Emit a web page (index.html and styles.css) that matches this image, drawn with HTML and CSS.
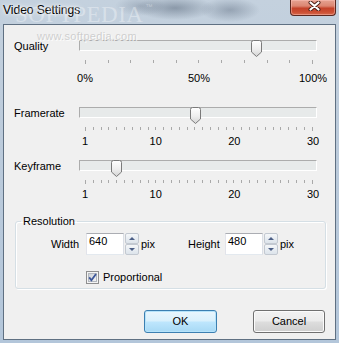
FILE: index.html
```html
<!DOCTYPE html>
<html>
<head>
<meta charset="utf-8">
<link rel="stylesheet" href="styles.css">
</head>
<body>
<div class="window">
  <div class="titlebar">
    <span class="title">Video Settings</span>
    <div class="close">
      <svg width="13" height="10" viewBox="0 0 13 10"><path d="M2.5 1.5 L10.5 8.5 M10.5 1.5 L2.5 8.5" stroke="#4a1c14" stroke-width="4" stroke-linecap="round"/><path d="M2.5 1.5 L10.5 8.5 M10.5 1.5 L2.5 8.5" stroke="#fff" stroke-width="2.2" stroke-linecap="round"/></svg>
    </div>
  </div>
  <div class="client">
    <div class="sliders">
      <div class="slider-row quality">
        <div class="label">Quality</div>
        <div class="slider">
          <div class="track-area">
            <div class="track"></div>
            <div class="rail">
              <svg class="thumb" style="left:75%" width="11" height="17" viewBox="0 0 11 17"><defs><linearGradient id="t1" x1="0" y1="0" x2="0" y2="1"><stop offset="0" stop-color="#ffffff"/><stop offset="0.55" stop-color="#eeeeee"/><stop offset="1" stop-color="#d2d2d2"/></linearGradient></defs><path d="M2.5 .5 H8.5 Q10.5 .5 10.5 2.5 V12 L5.5 16.5 L.5 12 V2.5 Q.5 .5 2.5 .5 Z" fill="url(#t1)" stroke="#7a7a7a"/></svg>
            </div>
          </div>
          <div class="ticks"><i></i><i></i><i></i><i></i><i></i><i></i><i></i><i></i><i></i><i></i><i></i></div>
          <div class="scale"><span style="left:0%">0%</span><span style="left:50%">50%</span><span style="left:100%">100%</span></div>
        </div>
      </div>
      <div class="slider-row framerate">
        <div class="label">Framerate</div>
        <div class="slider">
          <div class="track-area">
            <div class="track"></div>
            <div class="rail">
              <svg class="thumb" style="left:48.28%" width="11" height="17" viewBox="0 0 11 17"><defs><linearGradient id="t2" x1="0" y1="0" x2="0" y2="1"><stop offset="0" stop-color="#ffffff"/><stop offset="0.55" stop-color="#eeeeee"/><stop offset="1" stop-color="#d2d2d2"/></linearGradient></defs><path d="M2.5 .5 H8.5 Q10.5 .5 10.5 2.5 V12 L5.5 16.5 L.5 12 V2.5 Q.5 .5 2.5 .5 Z" fill="url(#t2)" stroke="#7a7a7a"/></svg>
            </div>
          </div>
          <div class="ticks"><i></i><i></i><i></i><i></i><i></i><i></i><i></i><i></i><i></i><i></i><i></i><i></i><i></i><i></i><i></i><i></i><i></i><i></i><i></i><i></i><i></i><i></i><i></i><i></i><i></i><i></i><i></i><i></i><i></i><i></i></div>
          <div class="scale"><span style="left:0%">1</span><span style="left:31.03%">10</span><span style="left:65.52%">20</span><span style="left:100%">30</span></div>
        </div>
      </div>
      <div class="slider-row keyframe">
        <div class="label">Keyframe</div>
        <div class="slider">
          <div class="track-area">
            <div class="track"></div>
            <div class="rail">
              <svg class="thumb" style="left:13.79%" width="11" height="17" viewBox="0 0 11 17"><defs><linearGradient id="t3" x1="0" y1="0" x2="0" y2="1"><stop offset="0" stop-color="#ffffff"/><stop offset="0.55" stop-color="#eeeeee"/><stop offset="1" stop-color="#d2d2d2"/></linearGradient></defs><path d="M2.5 .5 H8.5 Q10.5 .5 10.5 2.5 V12 L5.5 16.5 L.5 12 V2.5 Q.5 .5 2.5 .5 Z" fill="url(#t3)" stroke="#7a7a7a"/></svg>
            </div>
          </div>
          <div class="ticks"><i></i><i></i><i></i><i></i><i></i><i></i><i></i><i></i><i></i><i></i><i></i><i></i><i></i><i></i><i></i><i></i><i></i><i></i><i></i><i></i><i></i><i></i><i></i><i></i><i></i><i></i><i></i><i></i><i></i><i></i></div>
          <div class="scale"><span style="left:0%">1</span><span style="left:31.03%">10</span><span style="left:65.52%">20</span><span style="left:100%">30</span></div>
        </div>
      </div>
    </div>

    <fieldset class="group">
      <legend>Resolution</legend>
      <div class="fields">
        <div class="field">
          <span class="flabel w-label">Width</span>
          <div class="input">640</div>
          <div class="spin"><span class="up"><b></b></span><span class="down"><b></b></span></div>
          <span class="unit">pix</span>
        </div>
        <div class="field">
          <span class="flabel h-label">Height</span>
          <div class="input">480</div>
          <div class="spin"><span class="up"><b></b></span><span class="down"><b></b></span></div>
          <span class="unit">pix</span>
        </div>
      </div>
      <div class="check-row">
        <svg class="checkbox" width="13" height="13" viewBox="0 0 13 13"><defs><linearGradient id="cb" x1="0" y1="0" x2="1" y2="1"><stop offset="0" stop-color="#cbcfd5"/><stop offset="1" stop-color="#f6f6f6"/></linearGradient></defs><rect x=".5" y=".5" width="12" height="12" fill="#f4f4f4" stroke="#8f8f8f"/><rect x="2.5" y="2.5" width="8" height="8" fill="url(#cb)" stroke="#b3b8bf"/><path d="M3.2 6.4 L5.4 9.2 L10 3" fill="none" stroke="#3c5699" stroke-width="1.8"/></svg>
        <span class="check-label">Proportional</span>
      </div>
    </fieldset>

    <div class="buttons">
      <div class="btn ok">OK</div>
      <div class="btn cancel">Cancel</div>
    </div>

    <span class="wm-url">www.softpedia.com</span>
  </div>
  <span class="wm-title">SOFTPEDIA<sup>™</sup></span>
</div>
</body>
</html>
```

FILE: styles.css
```css
* { box-sizing: border-box; }
html, body { margin: 0; padding: 0; }
body {
  width: 339px;
  height: 343px;
  overflow: hidden;
  font-family: "Liberation Sans", Arial, sans-serif;
  font-size: 11px;
  color: #000;
}
.window {
  position: relative;
  width: 339px;
  height: 343px;
  display: flex;
  flex-direction: column;
  overflow: hidden;
  background:
    radial-gradient(ellipse 40px 12px at 175px 8px, rgba(70, 85, 105, 0.45), rgba(70, 85, 105, 0)),
    radial-gradient(ellipse 30px 12px at 230px 10px, rgba(80, 95, 115, 0.4), rgba(80, 95, 115, 0)),
    radial-gradient(ellipse 25px 10px at 140px 6px, rgba(90, 105, 125, 0.3), rgba(90, 105, 125, 0)),
    linear-gradient(180deg, #c4d1de 0%, #bccbdb 40%, #b3c6da 100%);
}
.titlebar {
  height: 24px;
  flex: none;
  display: flex;
  align-items: flex-start;
}
.title {
  padding: 2px 0 0 3px;
  font-size: 12px;
  line-height: 16px;
  color: #000;
  text-shadow: 0 0 6px #fff, 0 0 3px #fff;
}
.close {
  margin-left: auto;
  margin-right: 3px;
  width: 46px;
  height: 16px;
  border: 1px solid #5b2820;
  border-top: none;
  border-radius: 0 0 4px 4px;
  background: linear-gradient(180deg, #e6a292 0%, #dc8672 40%, #c4422a 55%, #cc4f33 80%, #d56a4e 100%);
  box-shadow: inset 0 0 0 1px rgba(255, 200, 190, 0.45);
  display: flex;
  justify-content: center;
  align-items: flex-start;
  padding-top: 1px;
  padding-left: 3px;
}
.close svg { display: block; }

.client {
  position: relative;
  flex: 1;
  margin: 0 3px 3px 3px;
  border: 1px solid #5f7082;
  background: #f0f0f0;
  display: flex;
  flex-direction: column;
}
.sliders {
  padding-top: 13px;
}
.slider-row {
  display: grid;
  grid-template-columns: 65px 238px;
  padding-left: 10px;
}
.framerate { margin-top: 20px; }
.keyframe { margin-top: 10px; }
.label {
  padding-top: 2px;
  line-height: 13px;
}
.track-area {
  position: relative;
  height: 17px;
}
.track {
  margin-top: 2px;
  height: 11px;
  border: 1px solid;
  border-color: #acacac #ffffff #ffffff #acacac;
  background: #e7eaea;
}
.rail {
  position: absolute;
  top: 0;
  left: 6px;
  right: 4px;
  height: 17px;
}
.thumb {
  position: absolute;
  top: 0;
  margin-left: -5px;
  display: block;
}
.ticks {
  display: flex;
  justify-content: space-between;
  align-items: flex-start;
  margin: 3px 4px 0 6px;
  height: 4px;
}
.ticks i {
  display: block;
  width: 1px;
  height: 3px;
  background: #a9a9a9;
}
.ticks i:first-child, .ticks i:last-child { height: 4px; }
.scale {
  position: relative;
  height: 13px;
  line-height: 13px;
  margin: 4px 4px 0 6px;
}
.quality .scale { margin-top: 8px; }
.scale span {
  position: absolute;
  top: 0;
  transform: translateX(-50%);
  white-space: nowrap;
}

.group {
  margin: 14px 9px 0 11px;
  padding: 5px 0 4px 5px;
  border: 1px solid #d5dfe5;
  border-radius: 3px;
  box-shadow: inset 1px 1px 0 #fff, 1px 1px 0 #fff;
  min-width: 0;
}
.group legend {
  padding: 0 2px;
  line-height: 13px;
}
.fields {
  display: flex;
  padding-left: 30px;
  height: 22px;
}
.field {
  display: flex;
  align-items: center;
  width: 151px;
}
.flabel { line-height: 13px; }
.w-label { width: 35px; }
.h-label { width: 37px; }
.input {
  width: 38px;
  height: 22px;
  background: #fff;
  border: 1px solid;
  border-color: #abadb3 #dbdfe6 #e3e9ef #e2e3ea;
  padding: 1px 0 0 2px;
  font-size: 11px;
  line-height: 13px;
}
.spin {
  margin-left: 1px;
  width: 14px;
  height: 22px;
  display: flex;
  flex-direction: column;
}
.spin span {
  height: 11px;
  border: 1px solid #c3c9d1;
  border-radius: 2px;
  background: linear-gradient(180deg, #f5f7f9 0%, #e8edf2 50%, #dde4eb 100%);
  display: flex;
  justify-content: center;
  align-items: center;
}
.spin b {
  display: block;
  width: 0;
  height: 0;
  border-left: 3px solid transparent;
  border-right: 3px solid transparent;
}
.spin .up b { border-bottom: 3px solid #4c5f86; }
.spin .down b { border-top: 3px solid #4c5f86; }
.unit { margin-left: 2px; line-height: 13px; }

.check-row {
  display: flex;
  align-items: center;
  margin-top: 15px;
  padding-left: 65px;
  height: 14px;
}
.checkbox { display: block; flex: none; }
.check-label { margin-left: 4px; line-height: 13px; }

.buttons {
  display: flex;
  justify-content: flex-end;
  gap: 36px;
  margin-top: 21px;
  padding-right: 10px;
}
.btn {
  height: 23px;
  border-radius: 3px;
  display: flex;
  justify-content: center;
  align-items: center;
  line-height: 13px;
}
.ok {
  width: 73px;
  border: 1px solid #3c7fb1;
  background: linear-gradient(180deg, #eaf6fd 0%, #d9f0fc 48%, #bee6fd 52%, #a7d9f5 100%);
  box-shadow: inset 0 0 0 1px #b6e3fa;
}
.cancel {
  width: 72px;
  border: 1px solid #707070;
  background: linear-gradient(180deg, #f2f2f2 0%, #ebebeb 48%, #dddddd 52%, #cfcfcf 100%);
  box-shadow: inset 0 0 0 1px #fbfbfb;
}

.wm-url {
  position: absolute;
  left: 33px;
  top: 5px;
  font-size: 11px;
  color: rgba(190, 190, 190, 0.7);
  text-shadow: 1px 1px 0 rgba(255, 255, 255, 0.8);
  letter-spacing: 0.3px;
}
.wm-title {
  position: absolute;
  left: 15px;
  top: 2px;
  font-family: "Liberation Serif", "Times New Roman", serif;
  font-size: 23px;
  line-height: 26px;
  letter-spacing: 0.5px;
  color: rgba(255, 255, 255, 0.35);
}
.wm-title sup {
  font-family: "Liberation Sans", Arial, sans-serif;
  font-size: 7px;
  vertical-align: top;
  line-height: 10px;
  margin-left: 2px;
}
```
